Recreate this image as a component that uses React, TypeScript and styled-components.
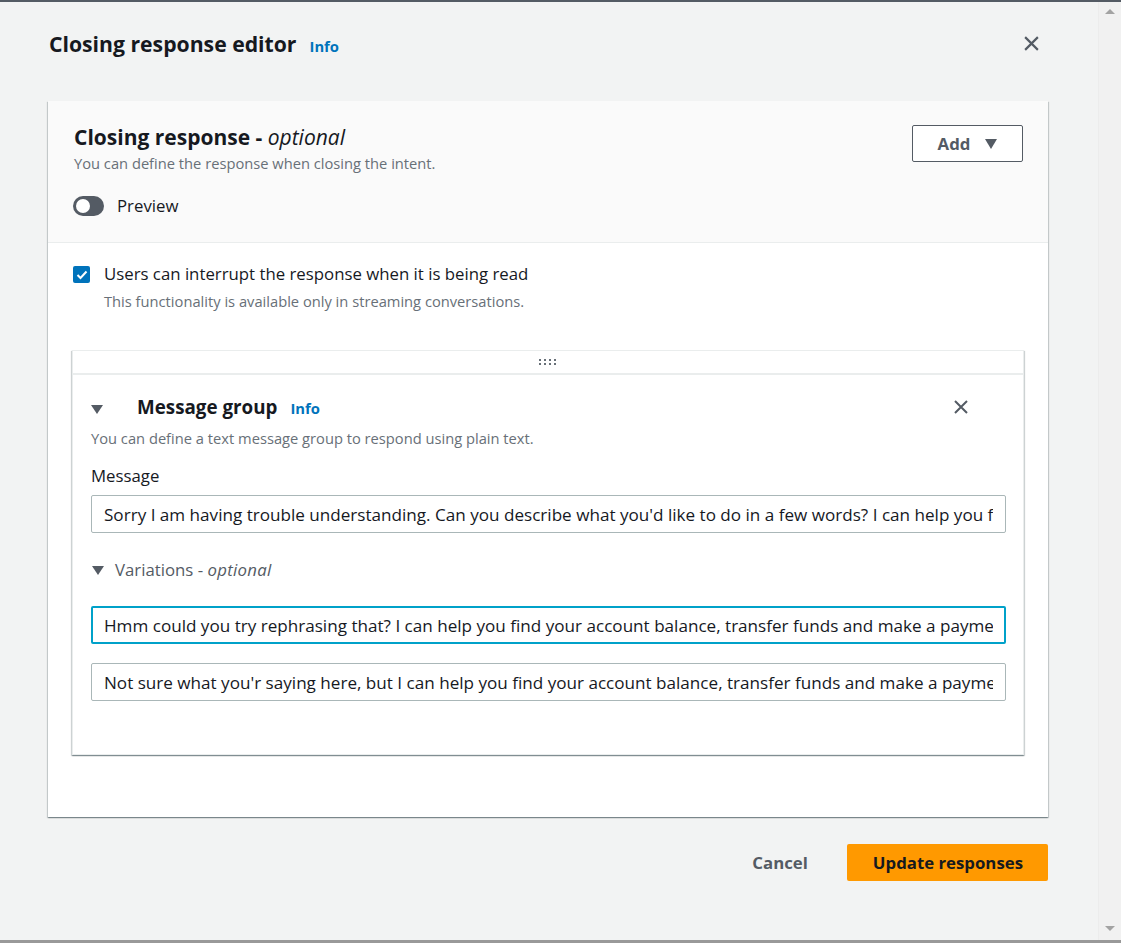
import React, { useState } from "react";
import styled, { createGlobalStyle } from "styled-components";

const GlobalStyle = createGlobalStyle`
  html, body {
    margin: 0;
    padding: 0;
    background: #f2f3f3;
    font-family: "Open Sans", "Noto Sans", Arial, sans-serif;
    color: #16191f;
    overflow: hidden;
  }
  * { box-sizing: border-box; }
  p { margin: 0; }
`;

const Frame = styled.div`
  width: 1121px;
  height: 943px;
  display: flex;
  flex-direction: column;
  border-top: 2px solid #545b64;
  border-bottom: 3px solid #999999;
`;

const Body = styled.div`
  flex: 1;
  display: flex;
  min-height: 0;
`;

const Main = styled.div`
  flex: 1;
  padding: 26px 50px 0 48px;
  display: flex;
  flex-direction: column;
`;

const ScrollTrack = styled.div`
  width: 23px;
  background: #f1f1f1;
  border-left: 1px solid #ececec;
  display: flex;
  flex-direction: column;
  justify-content: space-between;
  align-items: center;
  padding: 7px 0 9px;
`;

const Arrow = styled.div<{ $down?: boolean }>`
  width: 0;
  height: 0;
  border-left: 5px solid transparent;
  border-right: 5px solid transparent;
  ${(p) =>
    p.$down
      ? "border-top: 5px solid #a3a3a3;"
      : "border-bottom: 5px solid #a3a3a3;"}
`;

const TitleRow = styled.div`
  display: flex;
  align-items: center;
  justify-content: space-between;
  height: 30px;
  padding-left: 1px;
`;

const TitleGroup = styled.div`
  display: flex;
  align-items: baseline;
  gap: 13px;
`;

const Title = styled.h1`
  margin: 0;
  font-size: 21.2px;
  font-weight: 700;
  color: #16191f;
`;

const InfoLink = styled.a`
  font-size: 14.8px;
  font-weight: 700;
  color: #0073bb;
  text-decoration: none;
`;

const IconButton = styled.button<{ $right?: number }>`
  border: none;
  background: none;
  padding: 0;
  margin-right: ${(p) => p.$right ?? 0}px;
  display: flex;
  cursor: pointer;
  color: #545b64;
`;

const Card = styled.div`
  margin-top: 43px;
  background: #ffffff;
  box-shadow: 0 1px 1px 0 rgba(0, 28, 36, 0.3), 1px 1px 1px 0 rgba(0, 28, 36, 0.15),
    -1px 1px 1px 0 rgba(0, 28, 36, 0.15);
  padding-bottom: 62px;
`;

const CardHeader = styled.div`
  background: #fafafa;
  border-bottom: 1px solid #eaeded;
  padding: 21px 25px 25px 26px;
  display: flex;
  justify-content: space-between;
  align-items: flex-start;
`;

const HeaderText = styled.div`
  display: flex;
  flex-direction: column;
`;

const CardTitle = styled.h2`
  margin: 0;
  font-size: 21px;
  font-weight: 700;
  line-height: 30px;

  em {
    font-weight: 400;
  }
`;

const Description = styled.p<{ $top?: number }>`
  margin-top: ${(p) => p.$top ?? 0}px;
  font-size: 14.7px;
  line-height: 22px;
  color: #687078;
`;

const ToggleRow = styled.label`
  display: flex;
  align-items: center;
  gap: 13px;
  margin-top: 20px;
  margin-left: -1px;
  font-size: 16.8px;
  line-height: 23px;
  color: #16191f;
`;

const Toggle = styled.span`
  width: 31px;
  height: 20px;
  border-radius: 10px;
  background: #545b64;
  display: flex;
  align-items: center;
  padding-left: 3px;

  &::after {
    content: "";
    width: 14px;
    height: 14px;
    border-radius: 50%;
    background: #ffffff;
  }
`;

const AddButton = styled.button`
  margin-top: 3px;
  width: 111px;
  height: 37px;
  border: 1px solid #545b64;
  border-radius: 2px;
  background: #ffffff;
  color: #545b64;
  font-family: inherit;
  font-size: 16.8px;
  font-weight: 700;
  display: flex;
  align-items: center;
  justify-content: center;
  gap: 15px;
  padding-left: 6px;
`;

const Caret = styled.span`
  width: 0;
  height: 0;
  border-left: 6px solid transparent;
  border-right: 6px solid transparent;
  border-top: 10px solid #545b64;
`;

const CardContent = styled.div`
  padding: 20px 24px 0 24px;
`;

const CheckRow = styled.div`
  display: flex;
  gap: 14px;
  padding-left: 1px;
`;

const CheckBox = styled.span`
  width: 17px;
  height: 17px;
  border-radius: 2px;
  background: #0073bb;
  display: flex;
  align-items: center;
  justify-content: center;
  margin-top: 3px;
  flex-shrink: 0;
`;

const CheckText = styled.div`
  display: flex;
  flex-direction: column;
  gap: 5px;
`;

const CheckLabel = styled.span`
  font-size: 16.8px;
  line-height: 22px;
`;

const Group = styled.div`
  margin-top: 38px;
  border: 1px solid #eaeded;
  box-shadow: 0 1px 1px 0 rgba(0, 28, 36, 0.3), 1px 1px 1px 0 rgba(0, 28, 36, 0.15),
    -1px 1px 1px 0 rgba(0, 28, 36, 0.15);
  background: #ffffff;
`;

const DragBar = styled.div`
  height: 24px;
  border-bottom: 2px solid #eaeded;
  display: flex;
  justify-content: center;
  align-items: center;
`;

const GroupBody = styled.div`
  padding: 20px 17px 53px 18px;
`;

const GroupHead = styled.div`
  display: flex;
  align-items: center;
  justify-content: space-between;
  height: 24px;
`;

const GroupTitleWrap = styled.div`
  display: flex;
  align-items: baseline;
  gap: 13px;
`;

const TriangleDown = styled.span<{ $w: number; $h: number }>`
  display: inline-block;
  width: 0;
  height: 0;
  border-left: ${(p) => p.$w / 2}px solid transparent;
  border-right: ${(p) => p.$w / 2}px solid transparent;
  border-top: ${(p) => p.$h}px solid #545b64;
`;

const GroupTitle = styled.h3`
  margin: 0 0 0 21px;
  font-size: 18.8px;
  font-weight: 700;
  line-height: 24px;
`;

const FieldLabel = styled.p`
  margin-top: 16px;
  font-size: 16.8px;
  line-height: 22px;
`;

const TextInput = styled.input<{ $focused?: boolean; $top?: number }>`
  display: block;
  width: 100%;
  height: 38px;
  margin-top: ${(p) => p.$top ?? 0}px;
  border: ${(p) => (p.$focused ? "2px solid #00a1c9" : "1px solid #aab7b8")};
  border-radius: 2px;
  padding: 0 ${(p) => (p.$focused ? "11px" : "12px")};
  font-family: inherit;
  font-size: 17.1px;
  color: #16191f;
  background: #ffffff;
  outline: none;
`;

const VariationsToggle = styled.div`
  display: flex;
  align-items: center;
  gap: 11px;
  margin: 26px 0 25px 1px;
  font-size: 16.8px;
  color: #545b64;
  line-height: 22px;

  em {
    letter-spacing: 0.3px;
  }
`;

const InputStack = styled.div`
  display: flex;
  flex-direction: column;
  gap: 19px;
`;

const Footer = styled.div`
  display: flex;
  justify-content: flex-end;
  align-items: center;
  gap: 39px;
  margin-top: 27px;
`;

const CancelButton = styled.button`
  border: none;
  background: none;
  font-family: inherit;
  font-size: 16.8px;
  font-weight: 700;
  color: #545b64;
  padding: 0;
`;

const PrimaryButton = styled.button`
  height: 37px;
  padding: 0 25px 0 26px;
  border: none;
  border-radius: 2px;
  background: #ff9900;
  color: #16191f;
  font-family: inherit;
  font-size: 16.8px;
  font-weight: 700;
`;

const CloseIcon = ({ size }: { size: number }) => (
  <svg width={size} height={size} viewBox="0 0 16 16" fill="none">
    <path d="M2 2l12 12M14 2L2 14" stroke="#545b64" strokeWidth="2" />
  </svg>
);

const DragDots = () => (
  <svg width="20" height="6" viewBox="0 0 20 6">
    {[1, 6, 11, 16].map((x) =>
      [1, 5].map((y) => <rect key={`${x}-${y}`} x={x} y={y - 1} width="2" height="2" fill="#687078" />)
    )}
  </svg>
);

const messages = [
  "Sorry I am having trouble understanding. Can you describe what you'd like to do in a few words? I can help you find your account balance, transfer funds and make a payment.",
  "Hmm could you try rephrasing that? I can help you find your account balance, transfer funds and make a payment.",
  "Not sure what you'r saying here, but I can help you find your account balance, transfer funds and make a payment.",
];

const App = () => {
  const [interrupt] = useState(true);
  return (
    <>
      <GlobalStyle />
      <Frame>
        <Body>
          <Main>
            <TitleRow>
              <TitleGroup>
                <Title>Closing response editor</Title>
                <InfoLink href="#">Info</InfoLink>
              </TitleGroup>
              <IconButton aria-label="Close" $right={8}>
                <CloseIcon size={17} />
              </IconButton>
            </TitleRow>

            <Card>
              <CardHeader>
                <HeaderText>
                  <CardTitle>
                    Closing response - <em>optional</em>
                  </CardTitle>
                  <Description>You can define the response when closing the intent.</Description>
                  <ToggleRow>
                    <Toggle />
                    Preview
                  </ToggleRow>
                </HeaderText>
                <AddButton>
                  Add
                  <Caret />
                </AddButton>
              </CardHeader>

              <CardContent>
                <CheckRow>
                  <CheckBox>
                    {interrupt && (
                      <svg width="12" height="10" viewBox="0 0 12 10">
                        <path d="M1.5 5l3 3 6-6.5" stroke="#fff" strokeWidth="2" fill="none" />
                      </svg>
                    )}
                  </CheckBox>
                  <CheckText>
                    <CheckLabel>Users can interrupt the response when it is being read</CheckLabel>
                    <Description>This functionality is available only in streaming conversations.</Description>
                  </CheckText>
                </CheckRow>

                <Group>
                  <DragBar>
                    <DragDots />
                  </DragBar>
                  <GroupBody>
                    <GroupHead>
                      <GroupTitleWrap>
                        <TriangleDown $w={13} $h={9} />
                        <GroupTitle>Message group</GroupTitle>
                        <InfoLink href="#">Info</InfoLink>
                      </GroupTitleWrap>
                      <IconButton aria-label="Remove group" $right={37}>
                        <CloseIcon size={16} />
                      </IconButton>
                    </GroupHead>
                    <Description $top={8}>
                      You can define a text message group to respond using plain text.
                    </Description>
                    <FieldLabel>Message</FieldLabel>
                    <TextInput $top={8} defaultValue={messages[0]} readOnly />
                    <VariationsToggle>
                      <TriangleDown $w={12} $h={9} />
                      <span>
                        Variations - <em>optional</em>
                      </span>
                    </VariationsToggle>
                    <InputStack>
                      <TextInput $focused defaultValue={messages[1]} readOnly />
                      <TextInput defaultValue={messages[2]} readOnly />
                    </InputStack>
                  </GroupBody>
                </Group>
              </CardContent>
            </Card>

            <Footer>
              <CancelButton>Cancel</CancelButton>
              <PrimaryButton>Update responses</PrimaryButton>
            </Footer>
          </Main>
          <ScrollTrack>
            <Arrow />
            <Arrow $down />
          </ScrollTrack>
        </Body>
      </Frame>
    </>
  );
};

export default App;
